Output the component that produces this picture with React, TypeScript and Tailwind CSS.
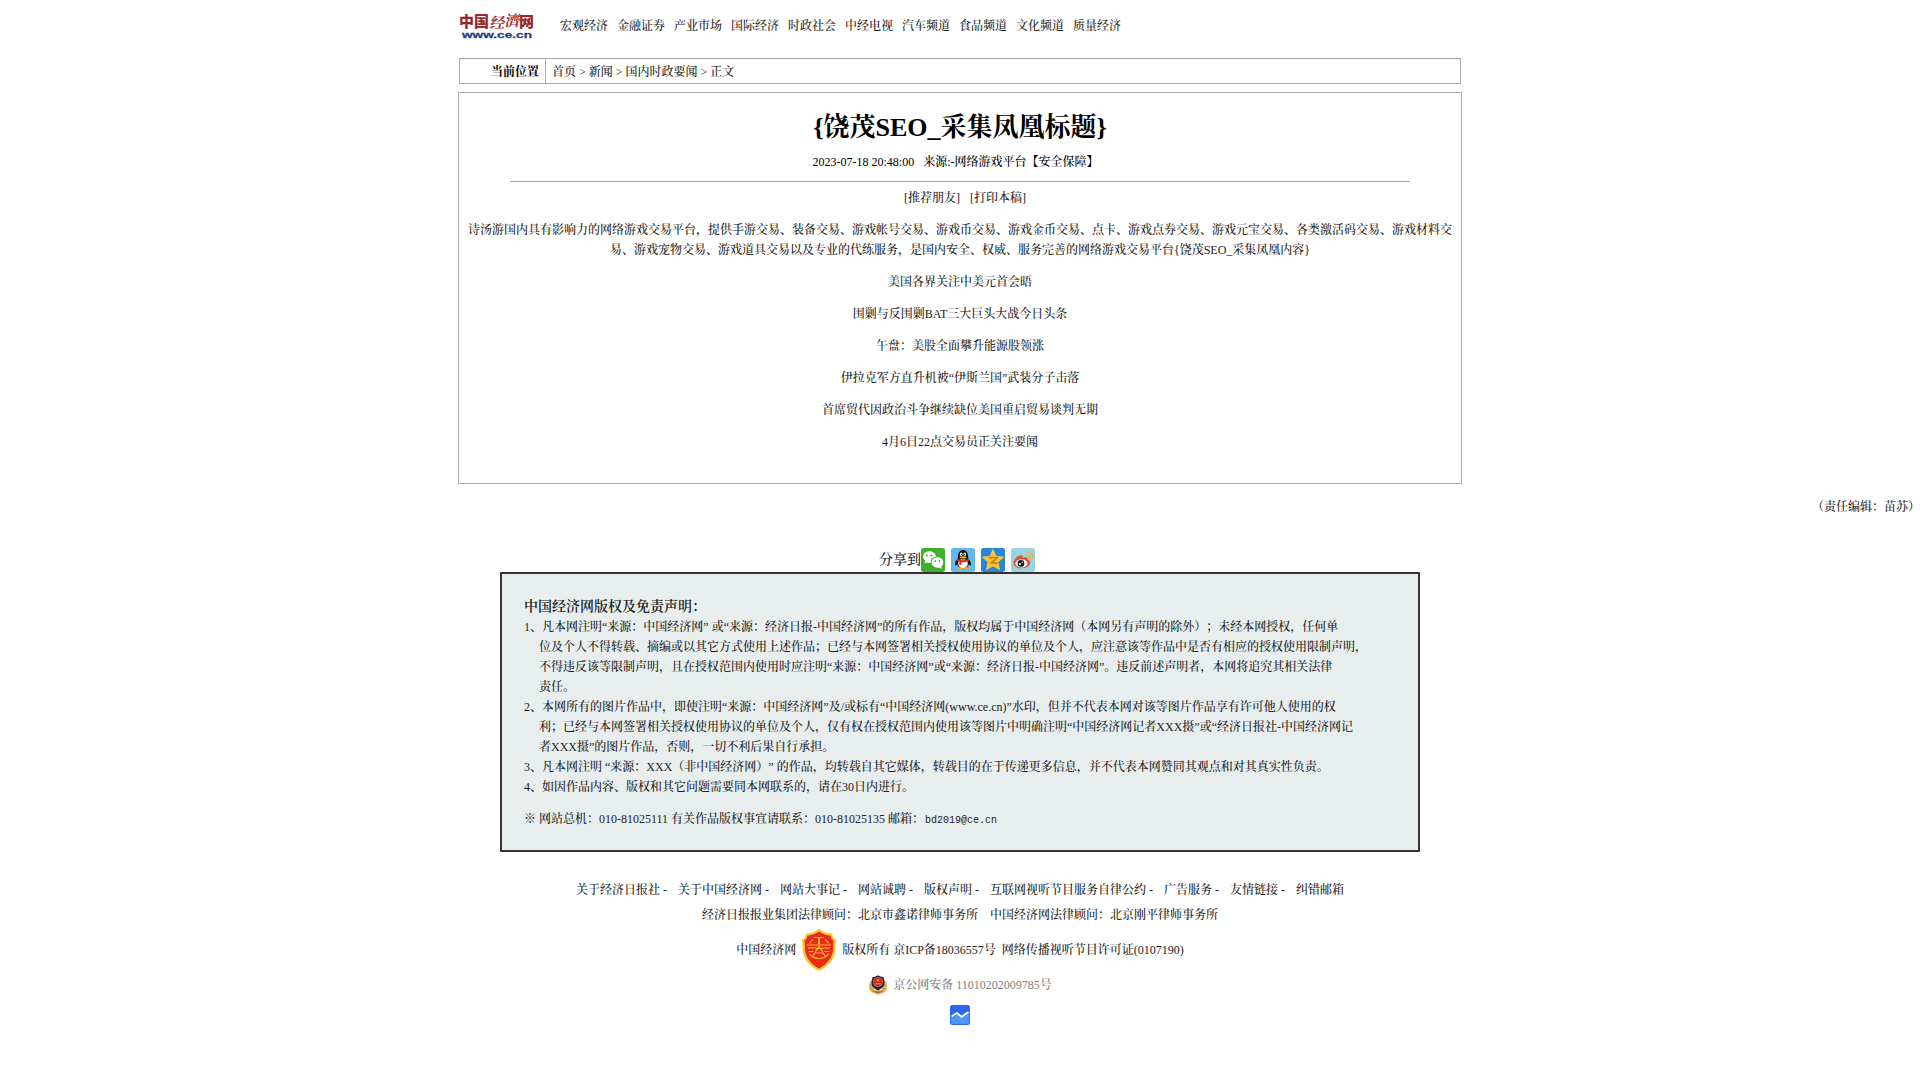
import React from "react";

const nav = ["宏观经济", "金融证券", "产业市场", "国际经济", "时政社会", "中经电视", "汽车频道", "食品频道", "文化频道", "质量经济"];

const headlines = [
  "美国各界关注中美元首会晤",
  "围剿与反围剿BAT三大巨头大战今日头条",
  "午盘：美股全面攀升能源股领涨",
  "伊拉克军方直升机被“伊斯兰国”武装分子击落",
  "首席贸代因政治斗争继续缺位美国重启贸易谈判无期",
  "4月6日22点交易员正关注要闻",
];

const notice: { text: string; indent: boolean }[] = [
  { text: "1、凡本网注明“来源：中国经济网” 或“来源：经济日报-中国经济网”的所有作品，版权均属于中国经济网（本网另有声明的除外）；未经本网授权，任何单", indent: false },
  { text: "位及个人不得转载、摘编或以其它方式使用上述作品；已经与本网签署相关授权使用协议的单位及个人，应注意该等作品中是否有相应的授权使用限制声明，", indent: true },
  { text: "不得违反该等限制声明，且在授权范围内使用时应注明“来源：中国经济网”或“来源：经济日报-中国经济网”。违反前述声明者，本网将追究其相关法律", indent: true },
  { text: "责任。", indent: true },
  { text: "2、本网所有的图片作品中，即使注明“来源：中国经济网”及/或标有“中国经济网(www.ce.cn)”水印，但并不代表本网对该等图片作品享有许可他人使用的权", indent: false },
  { text: "利；已经与本网签署相关授权使用协议的单位及个人，仅有权在授权范围内使用该等图片中明确注明“中国经济网记者XXX摄”或“经济日报社-中国经济网记", indent: true },
  { text: "者XXX摄”的图片作品，否则，一切不利后果自行承担。", indent: true },
  { text: "3、凡本网注明 “来源：XXX（非中国经济网）” 的作品，均转载自其它媒体，转载目的在于传递更多信息，并不代表本网赞同其观点和对其真实性负责。", indent: false },
  { text: "4、如因作品内容、版权和其它问题需要同本网联系的，请在30日内进行。", indent: false },
];

const footerLinks = ["关于经济日报社", "关于中国经济网", "网站大事记", "网站诚聘", "版权声明", "互联网视听节目服务自律公约", "广告服务", "友情链接", "纠错邮箱"];

function Logo() {
  return (
    <svg width="78" height="32" viewBox="0 0 78 32" className="block overflow-visible">
      <g fill="#96292c" fontWeight="900" fontFamily="'Noto Sans CJK SC', sans-serif">
        <text x="0" y="16.800" fontSize="15" textLength="30" lengthAdjust="spacingAndGlyphs">中国</text>
        <text x="60" y="16.800" fontSize="15" textLength="15" lengthAdjust="spacingAndGlyphs">网</text>
      </g>
      <g fill="#9f3236" fontWeight="700" fontFamily="'Noto Serif CJK SC', 'Noto Sans CJK SC', serif">
        <text transform="translate(30.500 17.500) skewX(-10)" fontSize="15">经</text>
        <text transform="translate(45.500 15.500) skewX(-10)" fontSize="15">濟</text>
      </g>
      <text x="3" y="27.500" fontSize="9.500" fontWeight="bold" fill="#25437f" stroke="#25437f" strokeWidth=".3" fontFamily="'Liberation Sans', sans-serif" textLength="70" lengthAdjust="spacingAndGlyphs">www.ce.cn</text>
    </svg>
  );
}

function WeChat() {
  return (
    <svg width="24" height="24" viewBox="0 0 24 24">
      <rect width="24" height="24" rx="2.500" fill="#3eaf2f" />
      <path d="M3.500 15.200l.7-2.600C.2 9.200 2.200 3.300 8.200 3.300c4.200 0 6.700 2.700 6.700 5.700-4 .2-6 3-5 5.800-1.500.3-2.700.1-3.800-.4z" fill="#fff" />
      <path d="M16.500 9.300c-3.300 0-6 2.300-6 5.200 0 3.600 4 5.900 7.800 4.900l2.500 1.300-.6-2.200c4-3.200 1.800-9.200-3.700-9.200z" fill="#fff" />
      <g fill="#3eaf2f"><circle cx="5.800" cy="7.400" r="1" /><circle cx="10.400" cy="7.400" r="1" /><circle cx="14.500" cy="13" r=".9" /><circle cx="18.500" cy="13" r=".9" /></g>
    </svg>
  );
}

function QQ() {
  return (
    <svg width="24" height="24" viewBox="0 0 24 24">
      <rect width="24" height="24" rx="2.500" fill="#62b9ec" />
      <path d="M6.500 11c-2 2-3 4.500-2.300 6.500.6.400 1.500-.5 2-1.500zM17.500 11c2 2 3 4.500 2.300 6.500-.6.400-1.500-.5-2-1.500z" fill="#151515" />
      <ellipse cx="12" cy="14.500" rx="6.200" ry="6.300" fill="#151515" />
      <ellipse cx="12" cy="15.500" rx="4.800" ry="5" fill="#fff" />
      <path d="M6.800 9c0-9.500 10.400-9.500 10.400 0v2.500H6.800z" fill="#151515" />
      <ellipse cx="10.200" cy="6.300" rx="1.300" ry="1.700" fill="#fff" /><ellipse cx="13.800" cy="6.300" rx="1.300" ry="1.700" fill="#fff" />
      <circle cx="10.500" cy="6.600" r=".6" fill="#111" /><circle cx="13.500" cy="6.600" r=".6" fill="#111" />
      <ellipse cx="12" cy="9.400" rx="3.300" ry="1.100" fill="#f5a81c" />
      <path d="M6.300 10.800c3.500 1.800 8 1.800 11.400 0l.3 2c-2.500 1.300-5.500 1.600-7.500 1.400v2.500H8.300v-3l-2.200-.9z" fill="#e02c24" />
      <ellipse cx="8.800" cy="20.600" rx="3" ry="1.300" fill="#f5a81c" /><ellipse cx="15.200" cy="20.600" rx="3" ry="1.300" fill="#f5a81c" />
    </svg>
  );
}

function QZone() {
  return (
    <svg width="24" height="24" viewBox="0 0 24 24">
      <rect width="24" height="24" rx="2.500" fill="#2a86d3" />
      <path d="M12 1.300l3.100 6.900 7.700.9-5.700 5 1.500 7.700-6.600-3.800-6.600 3.800 1.500-7.700-5.700-5 7.700-.9z" fill="#fcc62d" stroke="#fbdc60" strokeWidth=".5" />
      <path d="M7.800 9.800c3-.5 5.700-.4 8.400 0l-6 5c2 .3 4 .3 6.500.1" fill="none" stroke="#d9701b" strokeWidth="1.500" />
    </svg>
  );
}

function Weibo() {
  return (
    <svg width="24" height="24" viewBox="0 0 24 24">
      <rect width="24" height="24" rx="2.500" fill="#98d4e2" />
      <path d="M2.500 15c0-3.800 5-8.400 8.200-7.800 1.500.3 1.200 1.900.9 2.700 2.400-1 5.400-1 4.800 1.700 5.400 1.600 3 8.400-6 8.600-4.500 0-7.900-2-7.900-5.200z" fill="#e6502a" />
      <ellipse cx="10.400" cy="15.300" rx="6" ry="4.100" fill="#fff" />
      <circle cx="10" cy="15.400" r="3.300" fill="#161616" /><circle cx="9" cy="16" r="1.100" fill="#fff" /><circle cx="11.200" cy="14.300" r=".7" fill="#fff" />
      <path d="M15.500 4.500c4-1 7.200 2.400 6 6.500M16 7.800c2-.4 3.500 1 3 3" fill="none" stroke="#efb535" strokeWidth="1.500" strokeLinecap="round" />
    </svg>
  );
}

function Shield() {
  return (
    <svg width="36" height="44" viewBox="0 0 36 44" className="mx-[5px]">
      <path d="M18 1c4 3 9 4.500 13 4.500l1.200 4.500 3 2c-.8 3-.6 6-.8 10C33.800 31 27 38.500 18 43 9 38.500 2.200 31 1.600 22 1.400 18 1.600 15 .8 12l3-2L5 5.500C9 5.500 14 4 18 1z" fill="#fbc62c" />
      <path d="M18 3.500c4 2.500 8 4 11.500 4.200l1 3.300 2.200 1.500c-.8 3-.6 6-.6 9C31.400 29.500 26 36.500 18 40.500 10 36.500 4.600 29.500 3.900 21.500c0-3 .2-6-.6-9L5.500 11l1-3.300C10 7.500 14 6 18 3.500z" fill="#ec2a18" />
      <g fill="none" stroke="#f8b62b" strokeWidth="1.200">
        <path d="M13 9.500h10M6 17h24M7 20h8M21 20h8M15 20.500h6M18 18l-6 10M18 18l6 10M14 25h8M7.500 23.500h5M23.500 23.500h5" />
        <path d="M18 9.500v7" strokeWidth="2" />
        <path d="M8.500 15.500a11 11 0 0 1 3.500-4M27.500 15.500a11 11 0 0 0-3.500-4M8.500 26c5 6 14 6 19 0" />
      </g>
    </svg>
  );
}

function Police() {
  return (
    <svg width="20" height="20" viewBox="0 0 20 20">
      <path d="M2.300 6C-.5 11 1 17 5 18l5 1.800 5-1.800c4-1 5.500-7 2.700-12L14 15H6z" fill="#e6bd6a" />
      <path d="M2 9l4 5M2 13l5 3M4 16l6 2M18 9l-4 5M18 13l-5 3M16 16l-6 2" stroke="#a9782e" strokeWidth=".7" />
      <path d="M10 .3l2.500 1.200 3 .7 1.300 5c-.3 4-3 6.500-6.800 8.300C6.200 13.700 3.500 11.200 3.200 7.200l1.300-5 3-.7z" fill="#2a2340" />
      <circle cx="10" cy="7" r="4.800" fill="#e2b34a" /><circle cx="10" cy="6.900" r="4.300" fill="#d81f1f" />
      <path d="M10 3.500l.6 1.300h1.200l-1 .8.400 1.200-1.200-.7-1.200.7.400-1.200-1-.8h1.200zM7.500 8.200h5v1h-5z" fill="#f4a93a" />
      <path d="M6.500 15.800c2 .8 5 .8 7 0l-1 2h-5z" fill="#bd5335" />
    </svg>
  );
}

function Chart() {
  return (
    <svg width="20" height="20" viewBox="0 0 20 20">
      <rect width="20" height="20" rx="2.500" fill="#2c69f0" />
      <path d="M1 12.500l6-3 4.500 3L19 8v9.500a1.500 1.500 0 0 1-1.500 1.500h-15A1.500 1.500 0 0 1 1 17.500z" fill="#4d96fb" />
      <path d="M1.500 11.500L7 8l4.500 3.800 7-4.800" fill="none" stroke="#fff" strokeWidth="1.800" />
    </svg>
  );
}

export default function App() {
  return (
    <div lang="zh-CN" className="flex h-[1080px] w-[1920px] flex-col overflow-hidden bg-white font-['Liberation_Serif','Songti_SC','Noto_Serif_CJK_SC','Noto_Sans_CJK_SC',serif] text-[12px] leading-[20px] font-medium whitespace-nowrap text-[#222] [text-spacing-trim:space-all]">
      <header className="mx-auto flex h-[58px] w-[1002px] pt-[10px]">
        <div className="w-[101px]"><Logo /></div>
        <nav className="flex gap-[9px] pt-[6px]">
          {nav.map((n) => <a key={n} className="w-12">{n}</a>)}
        </nav>
      </header>

      <div className="mx-auto flex h-[26px] w-[1002px] shrink-0 border border-[#aaa]">
        <div className="w-[86px] border-r border-[#aaa] pt-px pr-[6px] text-right leading-[23px] font-bold text-black"><span className="relative top-px">当前位置</span></div>
        <div className="pt-[2px] pl-[6px] leading-[23px]">首页 &gt; 新闻 &gt; 国内时政要闻 &gt; 正文</div>
      </div>

      <article className="mx-auto mt-[8px] flex h-[392px] w-[1004px] shrink-0 flex-col items-center border border-[#aaa] text-center">
        <h1 className="mt-[15px] h-[40px] text-[26px] leading-[40px] font-bold text-black">{"{饶茂SEO_采集凤凰标题}"}</h1>
        <div className="mt-[4px] mr-[9px] flex gap-[9px] text-black"><span>2023-07-18 20:48:00</span><span>来源:-网络游戏平台【安全保障】</span></div>
        <hr className="mt-[9px] w-[900px] border-t border-[#aaa]" />
        <div className="mt-[6px] ml-[10px] flex gap-[10px]"><span>[推荐朋友]</span><span>[打印本稿]</span></div>
        <p className="mt-3">
          诗汤游国内具有影响力的网络游戏交易平台，提供手游交易、装备交易、游戏帐号交易、游戏币交易、游戏金币交易、点卡、游戏点券交易、游戏元宝交易、各类激活码交易、游戏材料交
          <br />
          {"易、游戏宠物交易、游戏道具交易以及专业的代练服务，是国内安全、权威、服务完善的网络游戏交易平台{饶茂SEO_采集凤凰内容}"}
        </p>
        {headlines.map((h) => <p key={h} className="mt-3">{h}</p>)}
      </article>

      <div className="mt-[13px] text-right">（责任编辑：苗苏）</div>

      <div className="mt-[31px] flex h-6 shrink-0 pl-[879px]">
        <span className="w-[42px] text-[14px] leading-[23px]">分享到</span>
        <div className="flex gap-[6px]"><WeChat /><QQ /><QZone /><Weibo /></div>
      </div>

      <section className="mx-auto flex h-[280px] w-[920px] shrink-0 flex-col border-2 border-[#333] bg-[#e8eeee] px-[22px] pt-[23px]">
        <h2 className="text-[14px] leading-[20px] font-semibold">中国经济网版权及免责声明：</h2>
        {notice.map((l) => <p key={l.text} className={l.indent ? "pl-[15px]" : ""}>{l.text}</p>)}
        <p className="mt-3">
          ※ 网站总机：010-81025111 有关作品版权事宜请联系：010-81025135 邮箱：
          <span className="ml-[1px] font-['Liberation_Mono',monospace] text-[10px] font-normal text-[#222]">bd2019@ce.cn</span>
        </p>
      </section>

      <footer className="flex flex-col items-center">
        <div className="mt-[25px] flex h-[25px] items-center gap-[11px]">
          {footerLinks.map((l, i) => <span key={l}>{l}{i < footerLinks.length - 1 ? " -" : ""}</span>)}
        </div>
        <div className="flex h-[25px] items-center gap-[12px]"><span>经济日报报业集团法律顾问：北京市鑫诺律师事务所</span><span>中国经济网法律顾问：北京刚平律师事务所</span></div>
        <div className="mt-[1px] flex h-[44px] items-center">
          <span>中国经济网</span><Shield /><span>版权所有 京ICP备18036557号&nbsp; 网络传播视听节目许可证(0107190)</span>
        </div>
        <div className="mt-[2px] flex h-[22px] items-center gap-[5px] text-[#808080]"><Police /><span>京公网安备 11010202009785号</span></div>
        <div className="mt-[9px]"><Chart /></div>
      </footer>
    </div>
  );
}
